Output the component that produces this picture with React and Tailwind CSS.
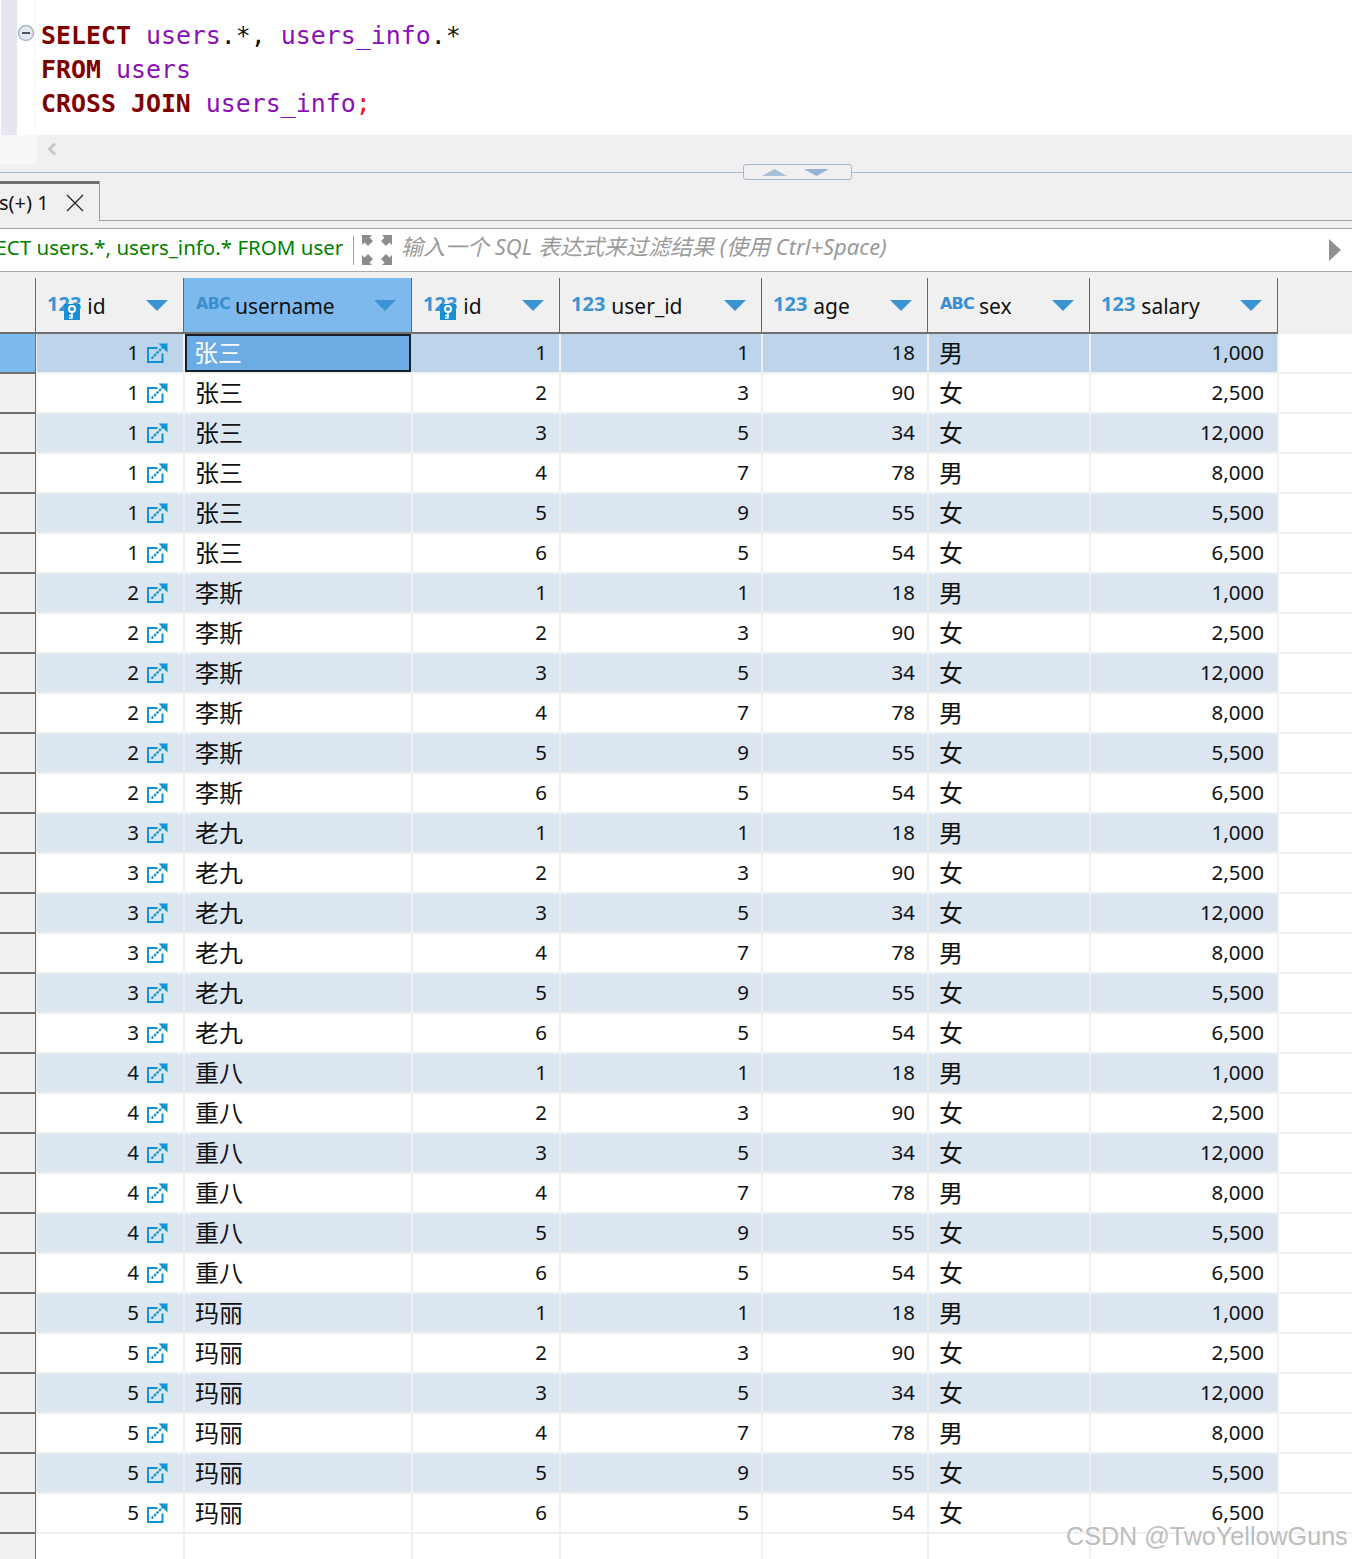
import React from 'react';

const UI_FONT = "font-['Noto_Sans','Noto_Sans_CJK_SC',sans-serif]";
const CJK_FONT = "font-['Noto_Sans_CJK_SC',sans-serif]";

const people = ['张三', '李斯', '老九', '重八', '玛丽'];
const infos = [
  { id: 1, userId: 1, age: 18, sex: '男', salary: '1,000' },
  { id: 2, userId: 3, age: 90, sex: '女', salary: '2,500' },
  { id: 3, userId: 5, age: 34, sex: '女', salary: '12,000' },
  { id: 4, userId: 7, age: 78, sex: '男', salary: '8,000' },
  { id: 5, userId: 9, age: 55, sex: '女', salary: '5,500' },
  { id: 6, userId: 5, age: 54, sex: '女', salary: '6,500' },
];

const rows = people.flatMap((name, p) =>
  infos.map((info) => ({ uid: p + 1, name, ...info }))
);

const LinkIcon = () => (
  <svg width="21" height="20" viewBox="0 0 21 20" fill="none" className="ml-[8px] shrink-0">
    <path d="M10.5 5H1V19H15.5V10.5" stroke="#0d94d4" strokeWidth="2" />
    <path d="M4.5 15.5L16.5 3.5" stroke="#0d94d4" strokeWidth="2.2" strokeDasharray="2.6 1" />
    <path d="M11.5 0.5H20.5V9.5L17.5 6.5L14.5 3.5Z" fill="#0d94d4" />
  </svg>
);

const KeyBadge = () => (
  <svg width="16" height="16" viewBox="0 0 16 16" className="absolute left-[17px] top-[9px]">
    <rect width="16" height="16" fill="#1b8fd6" />
    <circle cx="8" cy="5" r="3" fill="none" stroke="#fff" strokeWidth="2" />
    <path d="M8 8V14.5M8 11.5H5M8 14H5" stroke="#fff" strokeWidth="1.7" />
  </svg>
);

const SortArrow = () => (
  <svg width="22" height="11" viewBox="0 0 22 11" className="shrink-0">
    <path d="M0 0H22L11 11Z" fill="#3a93d3" />
  </svg>
);

const TypeTag = ({ type, hasKey }) => (
  <span className="relative shrink-0">
    {type === 'abc' ? (
      <span className="ml-[1px] mr-[-1px] block font-['DejaVu_Sans',sans-serif] text-[16px] font-bold leading-[20px] tracking-[-0.8px] text-[#3a8fd0] -translate-y-[1px]">
        ABC
      </span>
    ) : (
      <span className="block font-['Noto_Sans',sans-serif] text-[20px] font-bold leading-[20px] text-[#3a93d3] -translate-y-[1px]">
        123
      </span>
    )}
    {hasKey && <KeyBadge />}
  </span>
);

const HeaderCell = ({ width, type, label, hasKey, active }) => (
  <div className={`${width} flex h-full shrink-0 items-center border-r border-[#666] pl-[11px] pr-[15px] ${active ? 'bg-[#7db9ec]' : ''}`}>
    <TypeTag type={type} hasKey={hasKey} />
    <span className="ml-[6px] flex-1 translate-y-[1px] text-[21px] leading-none text-[#111]">{label}</span>
    <SortArrow />
  </div>
);

const Row = ({ row, index }) => {
  const first = index === 0;
  const band = first ? 'bg-[#bdd4eb]' : index % 2 === 0 ? 'bg-[#dce6f1]' : 'bg-white';
  const num = `flex shrink-0 items-center justify-end border-r-2 border-[#f0f0f0] pb-[2px] pr-[12px] ${band}`;
  const cjk = `flex shrink-0 items-center border-r-2 border-[#f0f0f0] pb-[2px] pl-[10px] text-[24px] ${CJK_FONT} ${band}`;
  return (
    <div className="flex h-[40px] border-b-2 border-[#f0f0f0] text-[20.5px] leading-none text-[#111]">
      <div className={`-mb-[2px] w-[36px] shrink-0 border-r border-b-2 border-[#6f6f6f] ${first ? 'bg-[#7db9ec]' : 'bg-[#f0f0f0]'}`} />
      <div className={`flex w-[149px] shrink-0 items-center justify-end border-x border-r-2 border-[#f0f0f0] pr-[15px] ${band}`}>
        <span className="-translate-y-[1px]">{row.uid}</span>
        <LinkIcon />
      </div>
      {first ? (
        <div className={`flex w-[228px] shrink-0 items-center ${band}`}>
          <div className={`flex h-[38px] w-[226px] items-center border-2 border-[#16202c] bg-[#6cabe3] pb-[2px] pl-[7px] text-[24px] text-white ${CJK_FONT}`}>
            {row.name}
          </div>
        </div>
      ) : (
        <div className={`w-[228px] ${cjk}`}>{row.name}</div>
      )}
      <div className={`w-[148px] ${num}`}>{row.id}</div>
      <div className={`w-[202px] ${num}`}>{row.userId}</div>
      <div className={`w-[166px] ${num}`}>{row.age}</div>
      <div className={`w-[162px] ${cjk}`}>{row.sex}</div>
      <div className={`w-[188px] ${num} pr-[13px]`}>{row.salary}</div>
      <div className="flex-1 bg-white" />
    </div>
  );
};

const ExpandIcon = () => (
  <svg width="30" height="30" viewBox="0 0 30 30" fill="#8c8c8c" className="shrink-0">
    <path d="M0 0H10L7.5 2.5L11 6L6 11L2.5 7.5L0 10Z" />
    <path d="M30 0V10L27.5 7.5L24 11L19 6L22.5 2.5L20 0Z" />
    <path d="M0 30V20L2.5 22.5L6 19L11 24L7.5 27.5L10 30Z" />
    <path d="M30 30H20L22.5 27.5L19 24L24 19L27.5 22.5L30 20Z" />
  </svg>
);

export default function App() {
  return (
    <div className={`relative h-[1559px] w-[1352px] overflow-hidden bg-white ${UI_FONT}`}>
      {/* sql editor */}
      <div className="flex h-[135px]">
        <div className="ml-[1px] w-[16px] bg-[#e6e6f2]" />
        <div className="relative w-[19px] border-r border-[#f4f4f4]">
          <svg width="18" height="18" viewBox="0 0 18 18" className="absolute left-0 top-[24px]">
            <circle cx="9" cy="9" r="7.5" fill="#e3e9f0" stroke="#a9b9c9" strokeWidth="1.6" />
            <path d="M5 9H13" stroke="#46586a" strokeWidth="2" />
          </svg>
        </div>
        <pre className="pl-[5px] pt-[19px] font-['DejaVu_Sans_Mono',monospace] text-[24.9px] leading-[34px] text-[#111]">
          <div><b className="text-[#7f0000]">SELECT</b> <span className="text-[#8a0fb5]">users</span>.*, <span className="text-[#8a0fb5]">users_info</span>.*</div>
          <div><b className="text-[#7f0000]">FROM</b> <span className="text-[#8a0fb5]">users</span></div>
          <div><b className="text-[#7f0000]">CROSS JOIN</b> <span className="text-[#8a0fb5]">users_info</span><span className="text-[#ff1010]">;</span></div>
        </pre>
      </div>

      {/* horizontal scrollbar */}
      <div className="flex h-[29px] bg-[#f0f0f0]">
        <div className="w-[37px] bg-[#f8f8f8]" />
        <svg width="12" height="14" viewBox="0 0 12 14" className="ml-[9px] mt-[7px]">
          <path d="M9 1.5L3.5 7L9 12.5" fill="none" stroke="#c4c4c4" strokeWidth="2.6" />
        </svg>
      </div>

      {/* sash */}
      <div className="flex h-[17px] items-start bg-[#f0f0f0]">
        <div className="mt-[8px] h-px w-[743px] bg-[#a3bbd8]" />
        <div className="flex h-[16px] w-[109px] items-center justify-center gap-[17px] rounded-[3px] border border-[#9fb8d8] bg-[#f0f0f0] pr-[4px]">
          <svg width="25" height="7" viewBox="0 0 25 7"><path d="M0 7H25L12.5 0Z" fill="#a9c0da" /></svg>
          <svg width="25" height="7" viewBox="0 0 25 7"><path d="M0 0H25L12.5 7Z" fill="#96b3d3" /></svg>
        </div>
        <div className="mt-[8px] h-px flex-1 bg-[#a3bbd8]" />
      </div>

      {/* result tabs */}
      <div className="flex h-[40px] border-b border-[#a0a0a0] bg-[#f0f0f0]">
        <div className="-mb-px w-[100px] border-r border-[#a0a0a0] bg-[#f0f0f0]">
          <div className="h-[3px] bg-[#6f6f6f]" />
          <div className="flex h-[37px] items-center justify-between pr-[15px]">
            <span className="-ml-[1px] text-[20px] leading-none text-[#111]">s(+) 1</span>
            <svg width="18" height="18" viewBox="0 0 18 18"><path d="M1 1L17 17M17 1L1 17" stroke="#222" strokeWidth="1.2" /></svg>
          </div>
        </div>
      </div>
      <div className="h-[7px] bg-[#f0f0f0]" />

      {/* filter bar */}
      <div className="flex h-[44px] items-center border-y border-[#a8a8a8] bg-white">
        <div className="w-[343px] shrink-0 overflow-hidden whitespace-nowrap pb-[6px]">
          <span className="-ml-[38px] inline-block text-[20.5px] leading-[26px] text-[#008000]">SELECT users.*, users_info.* FROM users</span>
        </div>
        <div className="ml-[10px] h-[29px] w-px shrink-0 bg-[#a0a0a0]" />
        <div className="ml-[8px]"><ExpandIcon /></div>
        <span className="ml-[9px] flex-1 pb-[8px] text-[22px] italic leading-[26px] text-[#9a9a9a]">
          输入一个 SQL 表达式来过滤结果 (使用 Ctrl+Space)
        </span>
        <svg width="12" height="22" viewBox="0 0 12 22" className="mr-[11px]"><path d="M0 0L12 11L0 22Z" fill="#909090" /></svg>
      </div>

      {/* grid header */}
      <div className="flex h-[62px] bg-[#f0f0f0] pt-[6px]">
        <div className="flex h-full border-b-2 border-[#6f6f6f]">
          <div className="h-full w-[36px] shrink-0 border-r border-[#666]" />
          <HeaderCell width="w-[148px]" type="num" label="id" hasKey />
          <HeaderCell width="w-[228px]" type="abc" label="username" active />
          <HeaderCell width="w-[148px]" type="num" label="id" hasKey />
          <HeaderCell width="w-[202px]" type="num" label="user_id" />
          <HeaderCell width="w-[166px]" type="num" label="age" />
          <HeaderCell width="w-[162px]" type="abc" label="sex" />
          <HeaderCell width="w-[188px]" type="num" label="salary" />
        </div>
      </div>

      {/* rows */}
      {rows.map((row, i) => (
        <Row key={i} row={row} index={i} />
      ))}
      <div className="flex h-[30px]">
        <div className="w-[36px] border-r border-[#6f6f6f] bg-[#f0f0f0]" />
        <div className="w-[149px] border-r-2 border-[#f0f0f0]" />
        <div className="w-[228px] border-r-2 border-[#f0f0f0]" />
        <div className="w-[148px] border-r-2 border-[#f0f0f0]" />
        <div className="w-[202px] border-r-2 border-[#f0f0f0]" />
        <div className="w-[166px] border-r-2 border-[#f0f0f0]" />
        <div className="w-[162px] border-r-2 border-[#f0f0f0]" />
        <div className="w-[188px] border-r-2 border-[#f0f0f0]" />
      </div>

      {/* watermark */}
      <div className="absolute left-[1066px] top-[1521px] whitespace-nowrap font-['Liberation_Sans',sans-serif] text-[25.15px] leading-[30px] text-[#bdbdbd] [text-shadow:0_0_2px_#fff]">
        CSDN @TwoYellowGuns
      </div>
    </div>
  );
}
